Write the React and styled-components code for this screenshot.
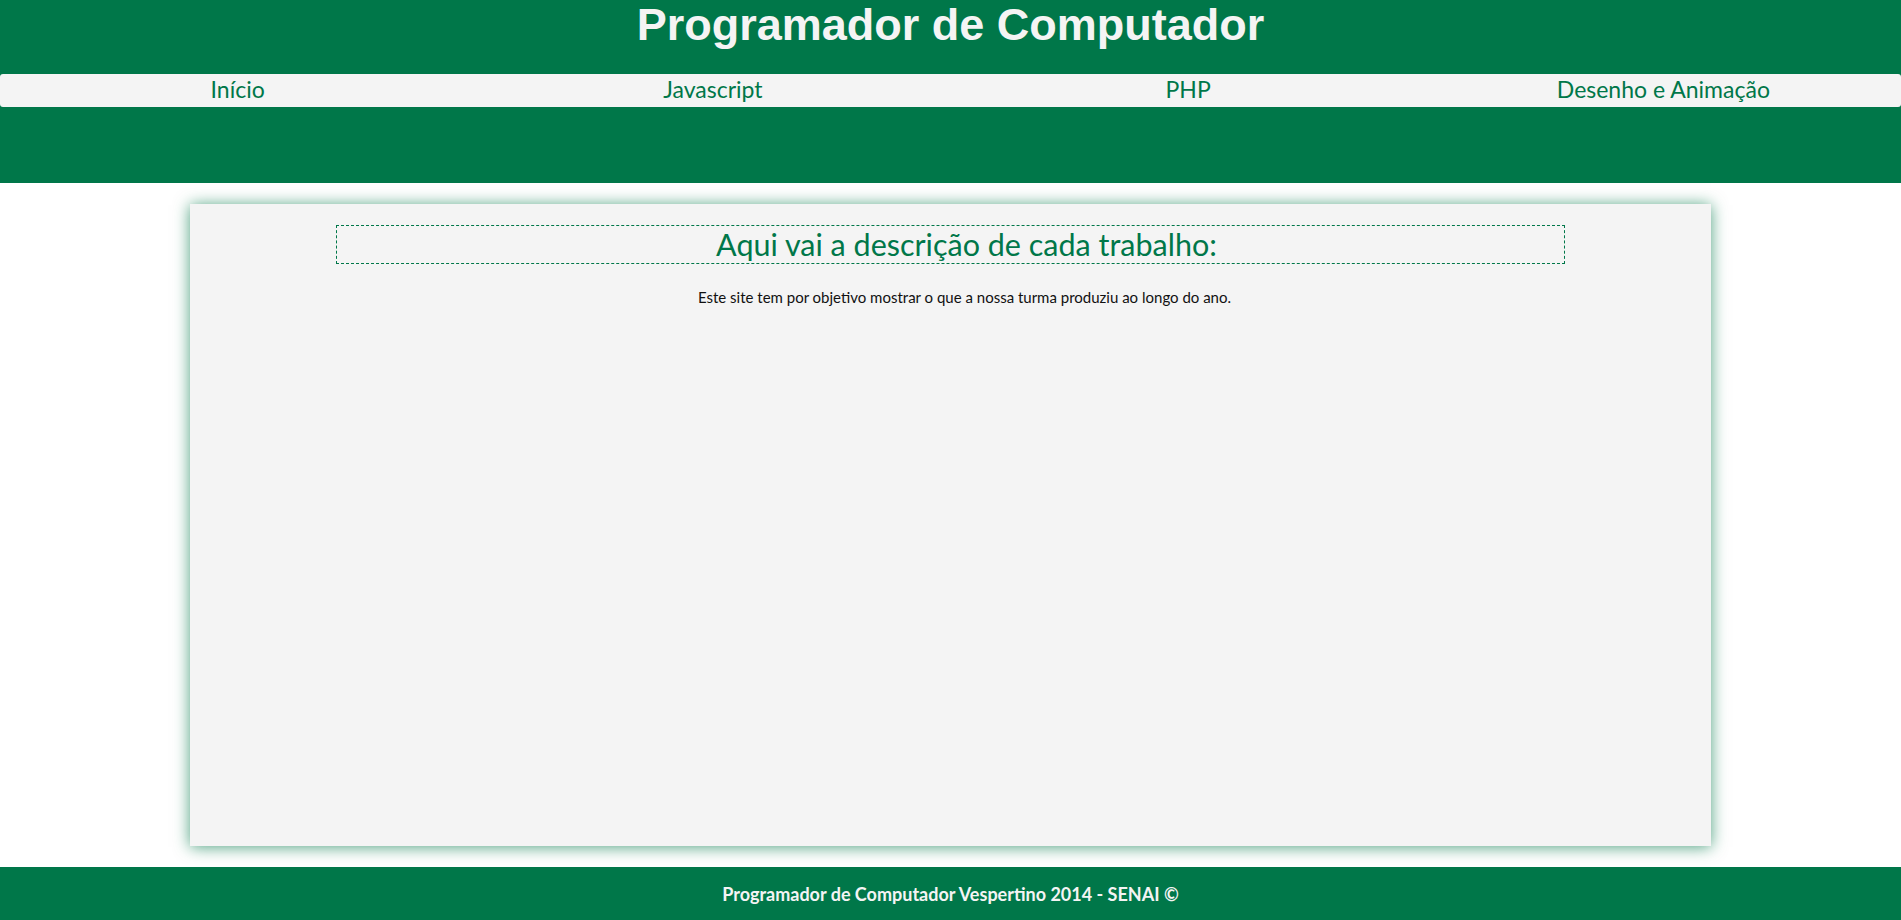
import React from 'react';
import styled, { createGlobalStyle } from 'styled-components';

const green = '#007749';
const light = '#f4f4f4';

/* 전역 스타일 */
const GlobalStyle = createGlobalStyle`
    html, body {
        margin: 0;
        padding: 0;
        background: #ffffff;
    }
    body {
        font-family: Lato, "Open Sans", sans-serif;
    }
`;

/* 상단 초록 헤더 */
const Header = styled.header`
    height: 183px;
    background: ${green};
`;

const SiteTitle = styled.h1`
    margin: 0;
    height: 74px;
    text-align: center;
    font-family: "Liberation Sans", Arial, sans-serif;
    font-size: 45px;
    font-weight: bold;
    line-height: 50px;
    color: ${light};
`;

/* 메뉴 바 */
const Menu = styled.nav`
    height: 33px;
    padding-bottom: 3px;
    box-sizing: border-box;
    background: ${light};
    border-radius: 3px;

    display: grid;
    grid-template-columns: repeat(4, 1fr);
    align-items: center;
`;

const MenuItem = styled.a`
    text-align: center;
    font-size: 23px;
    line-height: 30px;
    color: ${green};
    text-decoration: none;
    cursor: pointer;
`;

/* 본문 박스 */
const Content = styled.main`
    width: 80%;
    height: 642px;
    margin: 21px auto;
    padding-top: 21px;
    box-sizing: border-box;
    background: ${light};
    box-shadow: 0 1px 15px rgba(0, 119, 73, 0.7);
`;

/* 점선 테두리 제목 */
const SectionTitle = styled.h2`
    width: calc(80% + 12px);
    box-sizing: border-box;
    margin: 0 auto;
    padding-left: 32px;
    border: 1px dashed ${green};
    text-align: center;
    font-size: 30.5px;
    font-weight: normal;
    line-height: 37px;
    color: ${green};
`;

const Text = styled.p`
    margin: 24px 0 0;
    padding-left: 28px;
    text-align: center;
    font-size: 15px;
    color: #111;
`;

/* 하단 푸터 */
const Footer = styled.footer`
    height: 53px;
    background: ${green};

    display: flex;
    align-items: center;
    justify-content: center;

    font-size: 18px;
    font-weight: bold;
    color: ${light};
`;

const menu = ['Início', 'Javascript', 'PHP', 'Desenho e Animação'];

const App = () => {
    return (
        <>
            <GlobalStyle />
            <Header>
                <SiteTitle>Programador de Computador</SiteTitle>
                <Menu>
                    {menu.map(item => (
                        <MenuItem key={item}>{item}</MenuItem>
                    ))}
                </Menu>
            </Header>
            <Content>
                <SectionTitle>Aqui vai a descrição de cada trabalho:</SectionTitle>
                <Text>Este site tem por objetivo mostrar o que a nossa turma produziu ao longo do ano.</Text>
            </Content>
            <Footer>Programador de Computador Vespertino 2014 - SENAI ©</Footer>
        </>
    );
};

export default App;
